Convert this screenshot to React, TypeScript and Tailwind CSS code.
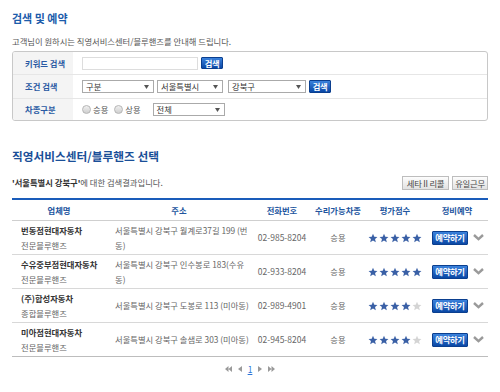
import React from "react";

const Arrow = () => (
  <svg width="5" height="4" viewBox="0 0 5 4" className="shrink-0">
    <path d="M0 0h5L2.5 4z" fill="#555" />
  </svg>
);

const Select = ({ label, w }: { label: string; w: string }) => (
  <div className={`${w} h-[13px] border border-[#aaa] bg-white flex items-center justify-between pl-[3px] pr-[4px] text-[#333]`}>
    <span>{label}</span>
    <Arrow />
  </div>
);

const BlueBtn = ({ label, cls }: { label: string; cls: string }) => (
  <div className={`${cls} flex items-center justify-center text-white font-bold border border-[#0b3f8f] bg-gradient-to-b from-[#3b82dc] to-[#0a48a6] tracking-[-0.3px] rounded-[1px]`}>
    {label}
  </div>
);

const Radio = ({ label }: { label: string }) => (
  <div className="flex items-center gap-[2px]">
    <div className="w-[9px] h-[9px] rounded-full border border-[#b5b5b5] bg-gradient-to-b from-[#f0f0f0] to-[#cfcfcf]" />
    <span className="text-[#555]">{label}</span>
  </div>
);

const Star = ({ on }: { on: boolean }) => (
  <svg width="10" height="10" viewBox="0 0 24 24">
    <path
      d="M12 1.5l3.1 7.2 7.6.6-5.8 5 1.8 7.6L12 17.8l-6.7 4.1 1.8-7.6-5.8-5 7.6-.6z"
      fill={on ? "#3a60a6" : "#d4d4d4"}
    />
  </svg>
);

const Chevron = () => (
  <svg width="11" height="7" viewBox="0 0 11 7">
    <path d="M1 1l4.5 4.2L10 1" fill="none" stroke="#9a9a9a" strokeWidth="2.4" />
  </svg>
);

const rows = [
  { name: "번동점현대자동차", sub: "전문블루핸즈", addr: ["서울특별시 강북구 월계로37길 199 (번", "동)"], tel: "02-985-8204", stars: 5 },
  { name: "수유중부점현대자동차", sub: "전문블루핸즈", addr: ["서울특별시 강북구 인수봉로 183(수유", "동)"], tel: "02-933-8204", stars: 5 },
  { name: "(주)합성자동차", sub: "종합블루핸즈", addr: ["서울특별시 강북구 도봉로 113 (미아동)"], tel: "02-989-4901", stars: 4 },
  { name: "미아점현대자동차", sub: "전문블루핸즈", addr: ["서울특별시 강북구 솔샘로 303 (미아동)"], tel: "02-945-8204", stars: 4 },
];

const cols = "grid grid-cols-[94px_146px_60px_52px_62px_62px]";

export default function App() {
  return (
    <div className="w-[500px] h-[392px] bg-white px-3 text-[8.3px] text-[#555] font-['Noto_Sans_CJK_KR',sans-serif] overflow-hidden">
      <div className="pt-[11px] leading-[14px] text-[11px] font-bold text-[#1c5cab]">검색 및 예약</div>
      <div className="mt-[10px] leading-[12px] text-[#555]">고객님이 원하시는 직영서비스센터/블루핸즈를 안내해 드립니다.</div>

      <div className="mt-[4px] border border-[#c8c8c8] rounded-[3px] overflow-hidden">
        <div className="flex h-[23px] border-b border-[#e6e6e6]">
          <div className="w-[60px] bg-[#f4f4f4] flex items-center pl-[12px] font-bold text-[#2a5aa3]">키워드 검색</div>
          <div className="flex items-center pl-[9px] gap-[3px]">
            <div className="w-[116px] h-[13px] border border-[#ddd] bg-white" />
            <BlueBtn label="검색" cls="w-[22px] h-[12px]" />
          </div>
        </div>
        <div className="flex h-[24px] border-b border-[#e6e6e6]">
          <div className="w-[60px] bg-[#f4f4f4] flex items-center pl-[12px] font-bold text-[#2a5aa3]">조건 검색</div>
          <div className="flex items-center pl-[9px]">
            <Select label="구분" w="w-[72px]" />
            <div className="w-[3px]" />
            <Select label="서울특별시" w="w-[66px]" />
            <div className="w-[5px]" />
            <Select label="강북구" w="w-[78px]" />
            <div className="w-[3px]" />
            <BlueBtn label="검색" cls="w-[22px] h-[13px]" />
          </div>
        </div>
        <div className="flex h-[21px]">
          <div className="w-[60px] bg-[#f4f4f4] flex items-center pl-[12px] font-bold text-[#2a5aa3]">차종구분</div>
          <div className="flex items-center pl-[9px]">
            <Radio label="승용" />
            <div className="w-[6px]" />
            <Radio label="상용" />
            <div className="w-[12px]" />
            <Select label="전체" w="w-[72px]" />
          </div>
        </div>
      </div>

      <div className="mt-[27px] leading-[16px] text-[11.7px] font-bold text-[#1a4f98]">직영서비스센터/블루핸즈 선택</div>

      <div className="mt-[12px] h-[14px] flex items-center justify-between">
        <div className="mb-[2px]">
          <span className="text-[#333] font-bold">'서울특별시 강북구'</span>
          <span>에 대한 검색결과입니다.</span>
        </div>
        <div className="flex gap-[3px] h-[14px]">
          <div className="w-[47px] flex items-center justify-center border border-[#bdbdbd] bg-gradient-to-b from-[#fdfdfd] to-[#e2e2e2] text-[#444] tracking-[-0.2px]">세타 II 리콜</div>
          <div className="w-[36px] flex items-center justify-center border border-[#bdbdbd] bg-gradient-to-b from-[#fdfdfd] to-[#e2e2e2] text-[#444] tracking-[-0.2px]">유일근무</div>
        </div>
      </div>

      <div className="mt-[8px] border-t-2 border-[#1a5cba]">
        <div className={`${cols} h-[21px] items-center border-b border-[#cfcfcf] font-bold text-[#22559e] text-center`}>
          <div>업체명</div>
          <div>주소</div>
          <div>전화번호</div>
          <div>수리가능차종</div>
          <div>평가점수</div>
          <div>정비예약</div>
        </div>
        {rows.map((r, i) => (
          <div
            key={i}
            className={`${cols} h-[34px] items-center border-b ${i === rows.length - 1 ? "border-[#bdbdbd]" : "border-[#d8d8d8]"}`}
          >
            <div className="pl-[9px] leading-[15px]">
              <div className="font-bold text-[#333] whitespace-nowrap">{r.name}</div>
              <div className="text-[#666]">{r.sub}</div>
            </div>
            <div className="pl-[9px] leading-[15px] text-[#666] whitespace-nowrap">
              {r.addr.map((a, j) => (
                <div key={j}>{a}</div>
              ))}
            </div>
            <div className="text-center text-[#666] text-[8.5px]">{r.tel}</div>
            <div className="text-center text-[#666]">승용</div>
            <div className="flex justify-center gap-[0.8px]">
              {[0, 1, 2, 3, 4].map((k) => (
                <Star key={k} on={k < r.stars} />
              ))}
            </div>
            <div className="flex items-center pl-[6px] gap-[5px]">
              <BlueBtn label="예약하기" cls="w-[36px] h-[14px]" />
              <Chevron />
            </div>
          </div>
        ))}
      </div>

      <div className="mt-[6px] h-[12px] flex items-center justify-center gap-[6px]">
        <svg width="7" height="6" viewBox="0 0 7 6"><path d="M3.5 0v6L0 3zM7 0v6L3.5 3z" fill="#9a9a9a" /></svg>
        <svg width="4" height="6" viewBox="0 0 4 6"><path d="M4 0v6L0 3z" fill="#9a9a9a" /></svg>
        <span className="text-[#2b74d8] text-[8.5px] underline">1</span>
        <svg width="4" height="6" viewBox="0 0 4 6"><path d="M0 0v6L4 3z" fill="#9a9a9a" /></svg>
        <svg width="7" height="6" viewBox="0 0 7 6"><path d="M0 0v6L3.5 3zM3.5 0v6L7 3z" fill="#9a9a9a" /></svg>
      </div>
    </div>
  );
}
